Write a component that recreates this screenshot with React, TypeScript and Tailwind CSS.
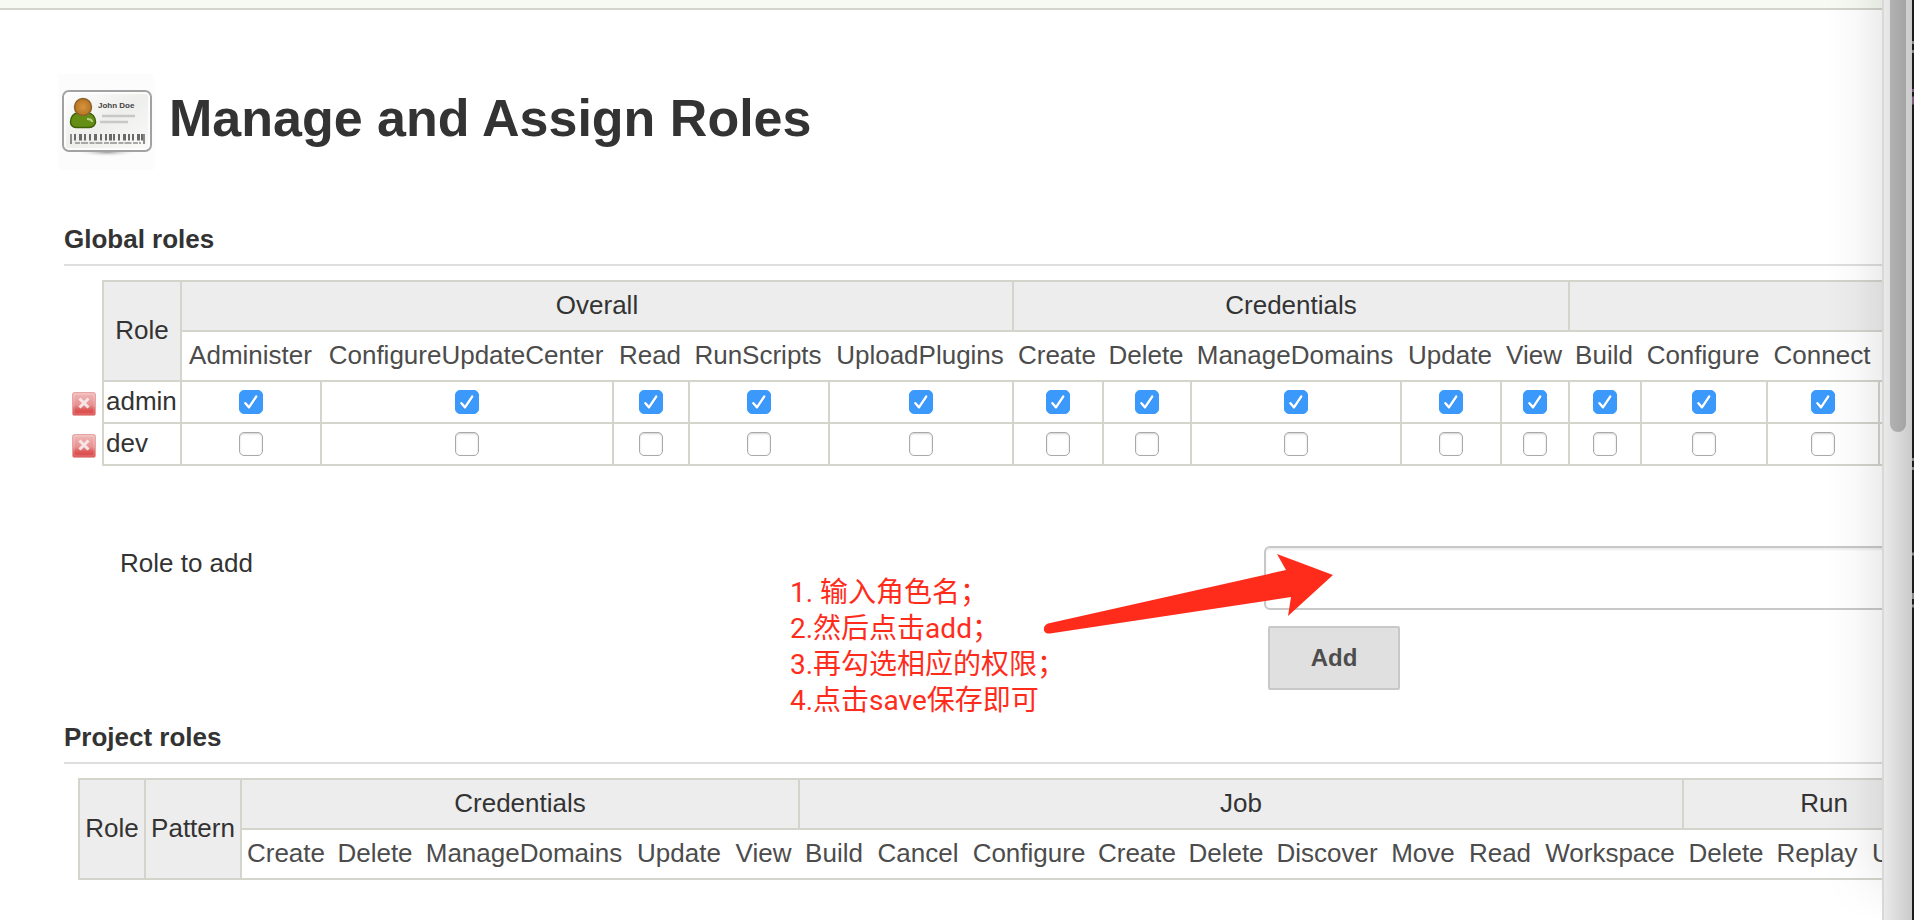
import { useState } from "react";

type Permission = { name: string; width: string };
type Group = { title: string; permissions: Permission[] };

const GLOBAL_GROUPS: Group[] = [
  {
    title: "Overall",
    permissions: [
      { name: "Administer", width: "w-[140px]" },
      { name: "ConfigureUpdateCenter", width: "w-[292px]" },
      { name: "Read", width: "w-[76px]" },
      { name: "RunScripts", width: "w-[140px]" },
      { name: "UploadPlugins", width: "w-[184px]" },
    ],
  },
  {
    title: "Credentials",
    permissions: [
      { name: "Create", width: "w-[90px]" },
      { name: "Delete", width: "w-[88px]" },
      { name: "ManageDomains", width: "w-[210px]" },
      { name: "Update", width: "w-[100px]" },
      { name: "View", width: "w-[68px]" },
    ],
  },
  {
    title: "",
    permissions: [
      { name: "Build", width: "w-[72px]" },
      { name: "Configure", width: "w-[126px]" },
      { name: "Connect", width: "w-[112px]" },
      { name: "", width: "w-[90px]" },
    ],
  },
];

const PROJECT_GROUPS: Group[] = [
  {
    title: "Credentials",
    permissions: [
      { name: "Create", width: "w-[91px]" },
      { name: "Delete", width: "w-[88px]" },
      { name: "ManageDomains", width: "w-[210px]" },
      { name: "Update", width: "w-[100px]" },
      { name: "View", width: "w-[69px]" },
    ],
  },
  {
    title: "Job",
    permissions: [
      { name: "Build", width: "w-[72px]" },
      { name: "Cancel", width: "w-[96px]" },
      { name: "Configure", width: "w-[126px]" },
      { name: "Create", width: "w-[90px]" },
      { name: "Delete", width: "w-[88px]" },
      { name: "Discover", width: "w-[114px]" },
      { name: "Move", width: "w-[78px]" },
      { name: "Read", width: "w-[76px]" },
      { name: "Workspace", width: "w-[144px]" },
    ],
  },
  {
    title: "Run",
    permissions: [
      { name: "Delete", width: "w-[88px]" },
      { name: "Replay", width: "w-[94px]" },
      { name: "Update", width: "w-[100px]" },
    ],
  },
];

const CELL = "border-2 border-[#d3d4cc] p-0";
const GROUP_CELL = "border-2 border-[#d3d4cc] bg-[#ededed] p-0 pb-0.5 text-center font-normal";

function ColumnSizes({ groups }: { groups: Group[] }) {
  return groups.flatMap((g) =>
    g.permissions.map((p) => <col key={g.title + p.name} className={p.width} />),
  );
}

function GroupTitles({ groups }: { groups: Group[] }) {
  return groups.map((g) => (
    <th key={g.title} scope="colgroup" colSpan={g.permissions.length} className={GROUP_CELL}>
      {g.title}
    </th>
  ));
}

function PermissionTitles({ groups }: { groups: Group[] }) {
  return groups.map((g) =>
    g.permissions.map((p) => (
      <th
        key={g.title + p.name}
        scope="col"
        className="border-y-2 border-[#d3d4cc] p-0 pr-0.5 pb-0.5 text-center font-normal whitespace-nowrap text-[#4c4c4c]"
      >
        {p.name}
      </th>
    )),
  );
}

function Checkbox({ label, initial }: { label: string; initial: boolean }) {
  const [checked, setChecked] = useState(initial);
  return (
    <label className="grid place-items-center">
      <input
        type="checkbox"
        aria-label={label}
        checked={checked}
        onChange={() => setChecked(!checked)}
        className="peer col-start-1 row-start-1 size-6 appearance-none rounded-[5px] border border-[#a9a9a9] bg-white shadow-[inset_0_1px_2px_#d0d0d0] checked:border-[#3b99fc] checked:bg-[#3b99fc] checked:shadow-none"
      />
      <svg
        viewBox="0 0 24 24"
        aria-hidden="true"
        className="pointer-events-none invisible col-start-1 row-start-1 size-6 peer-checked:visible"
      >
        <path d="M6.4 14.2 10 18.4 17.2 7.6" fill="none" stroke="#2f7fd4" strokeWidth="2.4" strokeLinecap="round" strokeLinejoin="round" opacity=".5" />
        <path d="M6.4 13.2 10 17.4 17.2 6.6" fill="none" stroke="#fff" strokeWidth="2.4" strokeLinecap="round" strokeLinejoin="round" />
      </svg>
    </label>
  );
}

function DeleteIcon() {
  return (
    <svg viewBox="0 0 24 24" aria-hidden="true" className="size-6">
      <defs>
        <linearGradient id="delete-fill" x1="0" y1="0" x2="0" y2="1">
          <stop offset="0" stopColor="#f0bcbc" />
          <stop offset=".55" stopColor="#e88f8f" />
          <stop offset=".75" stopColor="#dd5858" />
          <stop offset="1" stopColor="#dc4646" />
        </linearGradient>
      </defs>
      <rect x=".5" y=".5" width="23" height="23" rx="2" fill="url(#delete-fill)" stroke="#e8a3a3" />
      <rect x="2" y="2" width="20" height="20" rx="1" fill="none" stroke="#fff" strokeOpacity=".25" />
      <path d="M7.5 6.5 16.5 15.5M16.5 6.5 7.5 15.5" stroke="#f7e4e4" strokeWidth="3" />
    </svg>
  );
}

function BadgeIcon() {
  const bars = [16, 21, 26, 31, 36, 42, 47, 51, 55, 60, 65, 70, 74, 79, 83];
  return (
    <svg viewBox="0 0 96 96" aria-hidden="true" className="size-24 shrink-0">
      <defs>
        <linearGradient id="card" x1="0" y1="0" x2="1" y2="1">
          <stop offset="0" stopColor="#fff" />
          <stop offset=".5" stopColor="#eeeeec" />
          <stop offset="1" stopColor="#fbfbfa" />
        </linearGradient>
        <radialGradient id="head">
          <stop offset="0" stopColor="#d6953f" />
          <stop offset="1" stopColor="#b87320" />
        </radialGradient>
        <radialGradient id="shade">
          <stop offset="0" stopColor="#999" />
          <stop offset="1" stopColor="#fff" stopOpacity="0" />
        </radialGradient>
      </defs>
      <rect width="96" height="96" fill="#fcfcfc" />
      <ellipse cx="49" cy="78" rx="32" ry="5" fill="url(#shade)" />
      <rect x="5" y="17" width="88" height="60" rx="6" fill="url(#card)" stroke="#a2a2a2" strokeWidth="2" />
      <rect x="7" y="19" width="84" height="56" rx="4" fill="none" stroke="#fff" strokeWidth="1.5" />
      <path d="M12.5 48c0-5 3-9 7-9h10c5 0 8 4 8 9 0 3-3 5.500-6 5.500H18.500c-3 0-6-2-6-5.500z" fill="#648f14" stroke="#41600c" strokeWidth="1.5" />
      <path d="M29 45c3 0 5 1 5 3" fill="none" stroke="#b9cf8a" strokeWidth="2" />
      <circle cx="25" cy="33" r="8.5" fill="url(#head)" stroke="#8a642c" strokeWidth="1.5" />
      <text x="40" y="34" fontFamily="Liberation Sans, sans-serif" fontSize="8" fontWeight="bold" fill="#444">
        John Doe
      </text>
      <path d="M44 42h33M42 48h28" stroke="#c8c8c6" strokeWidth="2.5" />
      {bars.map((x, i) => (
        <rect key={x} x={x} y="60" width={i % 3 === 1 ? 3 : 2} height="6.5" fill="#6a6a6a" />
      ))}
      <path d="M13 60v10M86 60v10" stroke="#808080" strokeWidth="1.8" />
      <path d="M17 69h66" stroke="#a8a8a8" strokeWidth="1.8" strokeDasharray="5 1 7 1.5" />
    </svg>
  );
}

function SectionTitle({ children }: { children: string }) {
  return <h2 className="border-b-2 border-[#dedede] pb-2.5 text-[26px] leading-[30px] font-bold">{children}</h2>;
}

const ROLES = [
  { name: "admin", granted: true },
  { name: "dev", granted: false },
];

export default function App() {
  return (
    <div className="flex h-screen overflow-hidden bg-white font-['Liberation_Sans','Noto_Sans_CJK_SC',sans-serif] text-[26px] leading-8 text-[#333]">
      <div className="relative min-w-0 flex-1 overflow-hidden">
        <div className="h-2.5 border-b-2 border-[#d3d4cc] bg-[#f6faf2]" />
        <main className="pt-16 pl-16">
          <header className="-ml-1.5 flex items-center">
            <BadgeIcon />
            <h1 className="pb-2 pl-[15px] text-[52px] leading-[60px] font-bold">Manage and Assign Roles</h1>
          </header>

          <section className="pt-[54px]">
            <SectionTitle>Global roles</SectionTitle>
            <table className="mt-3.5 w-max table-fixed border-collapse">
              <colgroup>
                <col className="w-[39px]" />
                <col className="w-[78px]" />
                <ColumnSizes groups={GLOBAL_GROUPS} />
              </colgroup>
              <thead>
                <tr className="h-[50px]">
                  <td rowSpan={2} className="p-0" />
                  <th scope="col" rowSpan={2} className={GROUP_CELL}>
                    Role
                  </th>
                  <GroupTitles groups={GLOBAL_GROUPS} />
                </tr>
                <tr className="h-[50px]">
                  <PermissionTitles groups={GLOBAL_GROUPS} />
                </tr>
              </thead>
              <tbody>
                {ROLES.map((role) => (
                  <tr key={role.name} className="h-[42px]">
                    <td className="p-0">
                      <button type="button" aria-label={`Delete ${role.name}`} className="ml-2 block pt-1">
                        <DeleteIcon />
                      </button>
                    </td>
                    <th scope="row" className={CELL + " pb-0.5 pl-0.5 text-left font-normal"}>
                      {role.name}
                    </th>
                    {GLOBAL_GROUPS.map((g) =>
                      g.permissions.map((p) => (
                        <td key={g.title + p.name} className={CELL}>
                          <Checkbox label={`${role.name}: ${g.title} ${p.name}`} initial={role.granted} />
                        </td>
                      )),
                    )}
                  </tr>
                ))}
              </tbody>
            </table>
          </section>

          <form className="relative mt-20 grid grid-cols-[1200px_1fr]" onSubmit={(e) => e.preventDefault()}>
            <label htmlFor="role-to-add" className="pt-px pl-14">
              Role to add
            </label>
            <div>
              <input
                id="role-to-add"
                type="text"
                className="block h-16 w-[1200px] rounded-md border-2 border-[#c8c8c8] bg-white px-3 shadow-[inset_0_2px_2px_#eee]"
              />
              <button
                type="submit"
                className="mt-4 ml-1 block h-16 w-[132px] rounded-xs border-2 border-[#c8c8c8] bg-[#e0e0e0] text-2xl font-bold text-[#4d4d4d]"
              >
                Add
              </button>
            </div>
            <ol className="absolute top-7 left-[726px] pt-px font-[Roboto,'Noto_Sans_CJK_SC',sans-serif] text-[28px] leading-9 whitespace-nowrap text-[#ff2c1c]">
              <li>1. 输入角色名；</li>
              <li>2.然后点击add；</li>
              <li>3.再勾选相应的权限；</li>
              <li>4.点击save保存即可</li>
            </ol>
            <svg viewBox="0 0 292 84" aria-hidden="true" className="pointer-events-none absolute top-1.5 left-[979px] h-[84px] w-[292px]">
              <path
                d="M5 71.500C-1 73.500-0.500 82.500 7 81.500L248 45 245 64 290 23 234 2 243 18Z"
                fill="#ff2c1c"
              />
            </svg>
          </form>

          <section className="pt-8">
            <SectionTitle>Project roles</SectionTitle>
            <table className="mt-3.5 ml-3.5 w-max table-fixed border-collapse">
              <colgroup>
                <col className="w-[66px]" />
                <col className="w-[96px]" />
                <ColumnSizes groups={PROJECT_GROUPS} />
              </colgroup>
              <thead>
                <tr className="h-[50px]">
                  <th scope="col" rowSpan={2} className={GROUP_CELL}>
                    Role
                  </th>
                  <th scope="col" rowSpan={2} className={GROUP_CELL}>
                    Pattern
                  </th>
                  <GroupTitles groups={PROJECT_GROUPS} />
                </tr>
                <tr className="h-[50px]">
                  <PermissionTitles groups={PROJECT_GROUPS} />
                </tr>
              </thead>
            </table>
          </section>
        </main>
        <div className="pointer-events-none absolute inset-y-0 right-0 w-14 bg-linear-to-r from-transparent via-black/2 to-black/7 mask-b-from-92% mask-b-to-100%" />
      </div>

      <div className="w-[30px] shrink-0 border-l-2 border-[#d8d8d8] bg-linear-to-r from-[#eaeaea] to-[#cacaca]">
        <div className="ml-1.5 h-[47%] w-4 rounded-b-full bg-linear-to-r from-[#b2b2b2] to-[#a4a4a4]" />
      </div>
      <div className="w-0.5 shrink-0 bg-[#1c1c1c]">
        <svg viewBox="0 0 2 920" aria-hidden="true" className="h-full w-0.5">
          <path d="M0 42.500h2M0 51.500h2M0 459.500h2M0 468.500h2M0 554h2M0 606h2" stroke="#8a8a8a" strokeWidth="3" />
          <path d="M0 596h2" stroke="#8a8a8a" strokeWidth="6" />
          <path d="M0 90.500h2" stroke="#7d5a80" strokeWidth="3" />
          <path d="M0 100.500h2" stroke="#7d5a80" strokeWidth="8" />
        </svg>
      </div>
    </div>
  );
}
